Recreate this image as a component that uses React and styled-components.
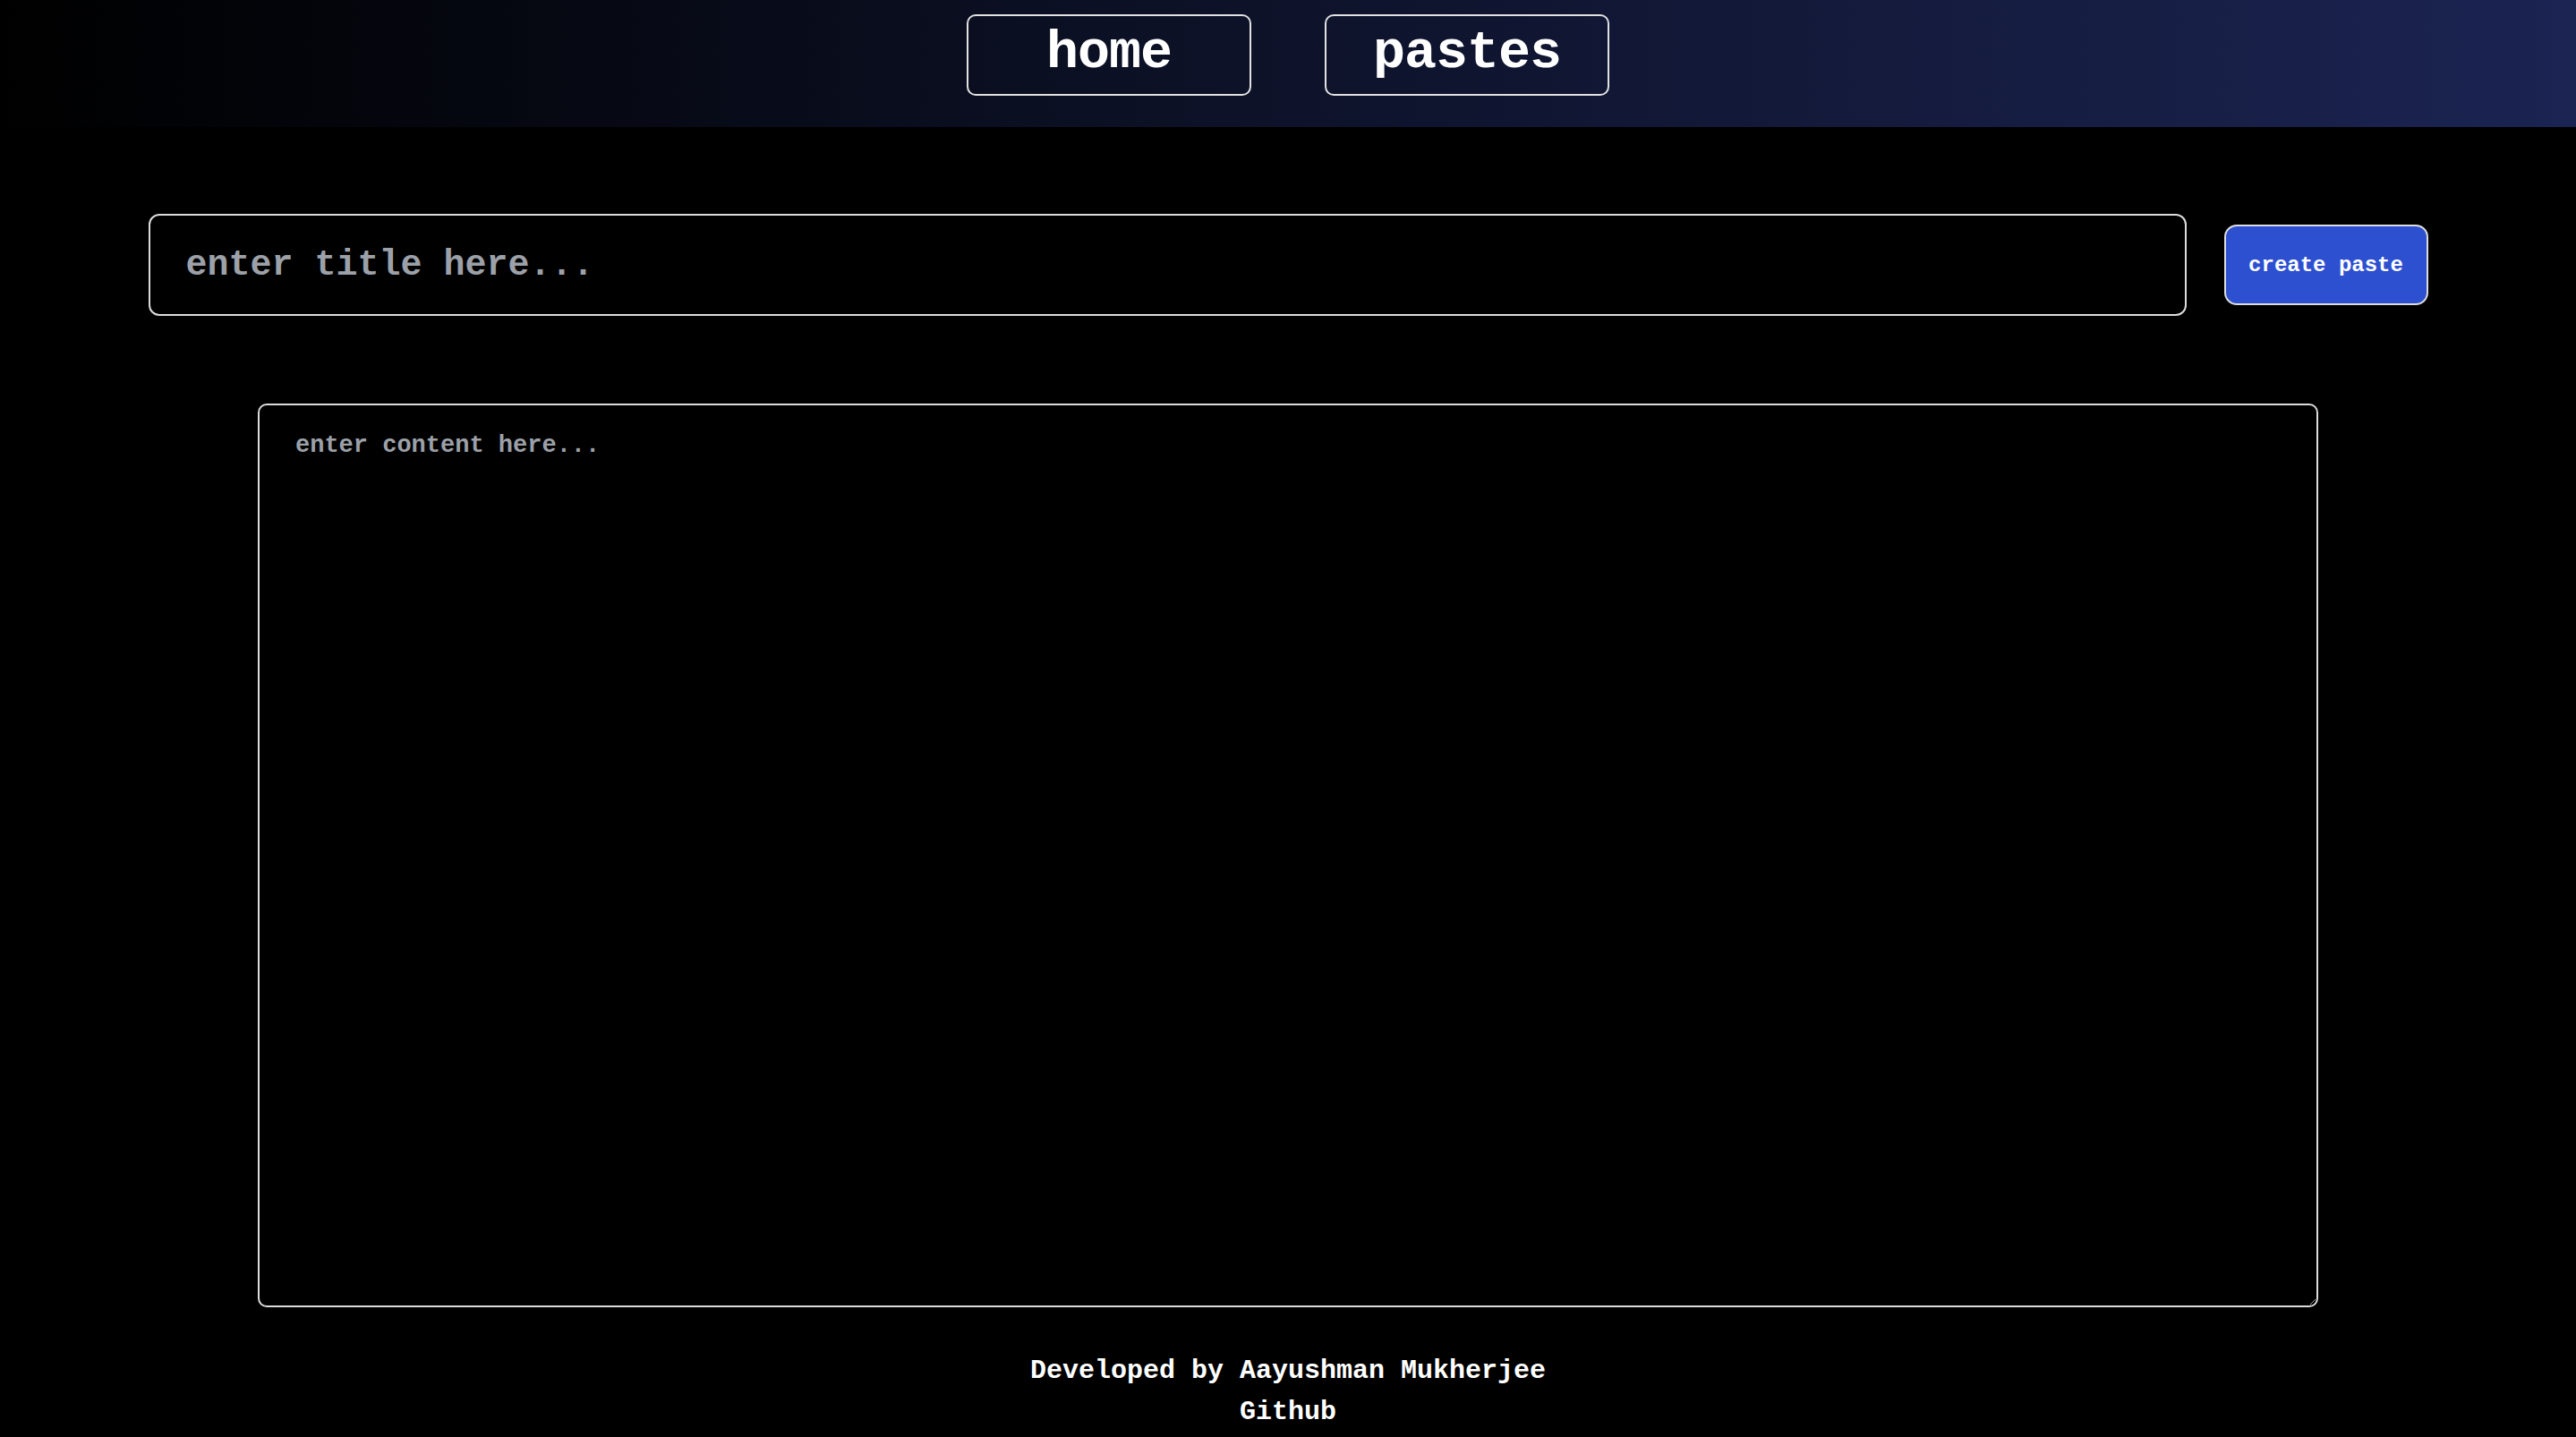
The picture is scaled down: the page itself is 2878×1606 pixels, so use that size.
import styled, { createGlobalStyle } from 'styled-components'

const GlobalStyle = createGlobalStyle`
  html, body {
    margin: 0;
    background: #000;
    color: #fff;
    font-family: "Liberation Mono", "DejaVu Sans Mono", monospace;
  }
  * { box-sizing: border-box; }
`

const Page = styled.div`
  min-height: 100vh;
  display: flex;
  flex-direction: column;
  background: #000;
`

const Navbar = styled.nav`
  height: 142px;
  padding-top: 16px;
  display: flex;
  justify-content: center;
  align-items: flex-start;
  gap: 82px;
  background: linear-gradient(to right, #000000 0%, #0c1126 45%, #1b2452 100%);
`

const NavLink = styled.a`
  width: 318px;
  height: 91px;
  display: flex;
  align-items: center;
  justify-content: center;
  border: 2px solid #e2e2e2;
  border-radius: 10px;
  color: #fff;
  font-size: 60px;
  font-weight: 700;
  text-decoration: none;
  letter-spacing: -1px;
  padding-bottom: 6px;
  cursor: pointer;
`

const Main = styled.main`
  display: flex;
  flex-direction: column;
  align-items: center;
  padding-top: 97px;
`

const Row = styled.div`
  width: 2547px;
  display: flex;
  align-items: center;
  gap: 42px;
`

const TitleInput = styled.input`
  flex: 1;
  height: 114px;
  background: #000;
  border: 2px solid #dcdcdc;
  border-radius: 12px;
  padding: 0 40px;
  color: #fff;
  font-family: inherit;
  font-size: 40px;
  font-weight: 700;
  outline: none;

  &::placeholder {
    color: #9ca0a8;
  }
`

const CreateButton = styled.button`
  width: 228px;
  height: 90px;
  background: #2d50d0;
  border: 2px solid #dcdcdc;
  border-radius: 14px;
  color: #fff;
  font-family: inherit;
  font-size: 24px;
  font-weight: 700;
  cursor: pointer;
`

const ContentArea = styled.textarea`
  display: block;
  margin-top: 98px;
  width: 2302px;
  height: 1010px;
  background: #000;
  border: 2px solid #dcdcdc;
  border-radius: 10px;
  padding: 30px 40px;
  color: #fff;
  font-family: inherit;
  font-size: 27px;
  font-weight: 700;
  outline: none;

  &::placeholder {
    color: #9ca0a8;
  }
`

const Footer = styled.footer`
  margin-top: 48px;
  display: flex;
  flex-direction: column;
  align-items: center;
  font-size: 30px;
  font-weight: 700;
  line-height: 46px;
  color: #fff;
`

const FooterLink = styled.a`
  color: #fff;
  text-decoration: none;
`

export default function App() {
  return (
    <Page>
      <GlobalStyle />
      <Navbar>
        <NavLink>home</NavLink>
        <NavLink>pastes</NavLink>
      </Navbar>
      <Main>
        <Row>
          <TitleInput type="text" placeholder="enter title here..." />
          <CreateButton>create paste</CreateButton>
        </Row>
        <ContentArea placeholder="enter content here..." />
        <Footer>
          <span>Developed by Aayushman Mukherjee</span>
          <FooterLink>Github</FooterLink>
        </Footer>
      </Main>
    </Page>
  )
}
